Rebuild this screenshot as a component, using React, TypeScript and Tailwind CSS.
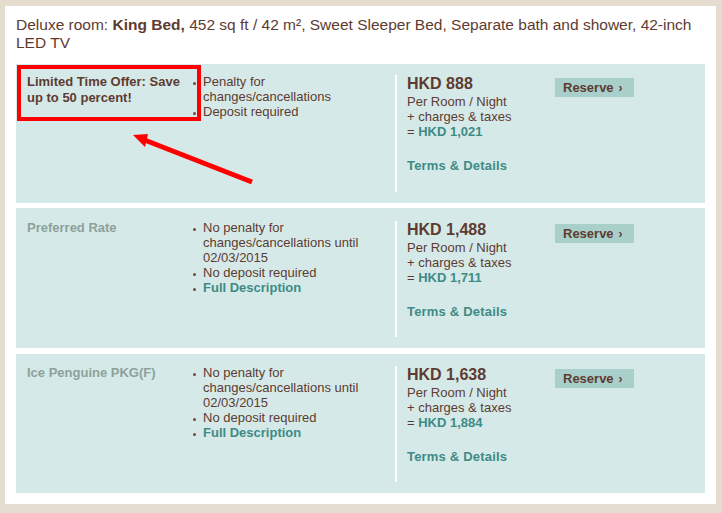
import React from "react";

type Rate = {
  title: string;
  titleStrong?: boolean;
  bullets: { text: string; link?: boolean }[];
  price: string;
  total: string;
};

const rates: Rate[] = [
  {
    title: "Limited Time Offer: Save up to 50 percent!",
    titleStrong: true,
    bullets: [{ text: "Penalty for changes/cancellations" }, { text: "Deposit required" }],
    price: "HKD 888",
    total: "HKD 1,021",
  },
  {
    title: "Preferred Rate",
    bullets: [
      { text: "No penalty for changes/cancellations until 02/03/2015" },
      { text: "No deposit required" },
      { text: "Full Description", link: true },
    ],
    price: "HKD 1,488",
    total: "HKD 1,711",
  },
  {
    title: "Ice Penguine PKG(F)",
    bullets: [
      { text: "No penalty for changes/cancellations until 02/03/2015" },
      { text: "No deposit required" },
      { text: "Full Description", link: true },
    ],
    price: "HKD 1,638",
    total: "HKD 1,884",
  },
];

function Card({ rate, first, h, pt }: { rate: Rate; first?: boolean; h: string; pt: string }) {
  return (
    <div className={`relative flex bg-[#d5eae8] px-[11px] ${pt} pb-[10px] ${h}`}>
      <div
        className={`w-[165px] shrink-0 text-[13px] leading-[16px] font-bold ${
          rate.titleStrong ? "text-[#5e3b31]" : "text-[#8da19b]"
        }`}
      >
        {rate.title}
      </div>
      <div className="w-[203px] shrink-0 text-[13px] leading-[15px] text-[#5e3b31]">
        {rate.bullets.map((b, i) => (
          <div key={i} className="flex">
            <div className="w-[11px] shrink-0 pl-[1px] pt-[8px]">
              <div className="h-[3px] w-[3px] rounded-full bg-[#6b4a40]" />
            </div>
            <div className={b.link ? "font-bold text-[#3f8a85] w-[185px]" : "w-[185px]"}>{b.text}</div>
          </div>
        ))}
      </div>
      <div className="my-px w-[2px] shrink-0 bg-white" />
      <div className="w-[158px] shrink-0 pl-[10px] text-[13px] leading-[15px] text-[#5e3b31]">
        <div className="text-[16px] leading-[20px] font-bold">{rate.price}</div>
        <div>Per Room / Night</div>
        <div>+ charges &amp; taxes</div>
        <div>
          = <span className="font-bold text-[#3f8a85]">{rate.total}</span>
        </div>
        <div className="mt-[19px] font-bold text-[#3f8a85] tracking-[0.2px]">Terms &amp; Details</div>
      </div>
      <div className="pt-[4px]">
        <div className="flex h-[19px] w-[79px] items-center bg-[#a9cfca] pl-[8px] text-[13px] font-bold text-[#5e3b31]">
          Reserve <span className="ml-[5px] text-[12px]">›</span>
        </div>
      </div>
      {first && (
        <>
          <div className="absolute left-[1px] top-[1px] h-[56px] w-[184px] border-[4px] border-[#ff0000]" />
          <svg className="absolute left-0 top-0" width="300" height="139" viewBox="0 0 300 139">
            <line x1="236" y1="118" x2="126" y2="75" stroke="#ff0000" strokeWidth="5" />
            <polygon points="117,71 132,70 129,83" fill="#ff0000" />
          </svg>
        </>
      )}
    </div>
  );
}

export default function App() {
  return (
    <div
      className="min-h-[513px] w-full bg-[#e3dccf] pt-[6px] pb-[9px] pl-[5px] pr-[6px]"
      style={{ fontFamily: '"Liberation Sans", Arial, sans-serif' }}
    >
      <div className="bg-white px-[11px] pt-[10px] pb-[11px]">
        <div className="text-[15.5px] leading-[18px] text-[#5e3b31]">
          Deluxe room: <span className="font-bold">King Bed,</span> 452 sq ft / 42 m², Sweet Sleeper Bed, Separate bath and shower, 42-inch LED TV
        </div>
        <div className="mt-[12px] flex flex-col">
          <Card rate={rates[0]} first h="h-[139px]" pt="pt-[10px]" />
          <div className="h-[5px]" />
          <Card rate={rates[1]} h="h-[140px]" pt="pt-[12px]" />
          <div className="h-[6px]" />
          <Card rate={rates[2]} h="h-[139px]" pt="pt-[11px]" />
        </div>
      </div>
    </div>
  );
}
